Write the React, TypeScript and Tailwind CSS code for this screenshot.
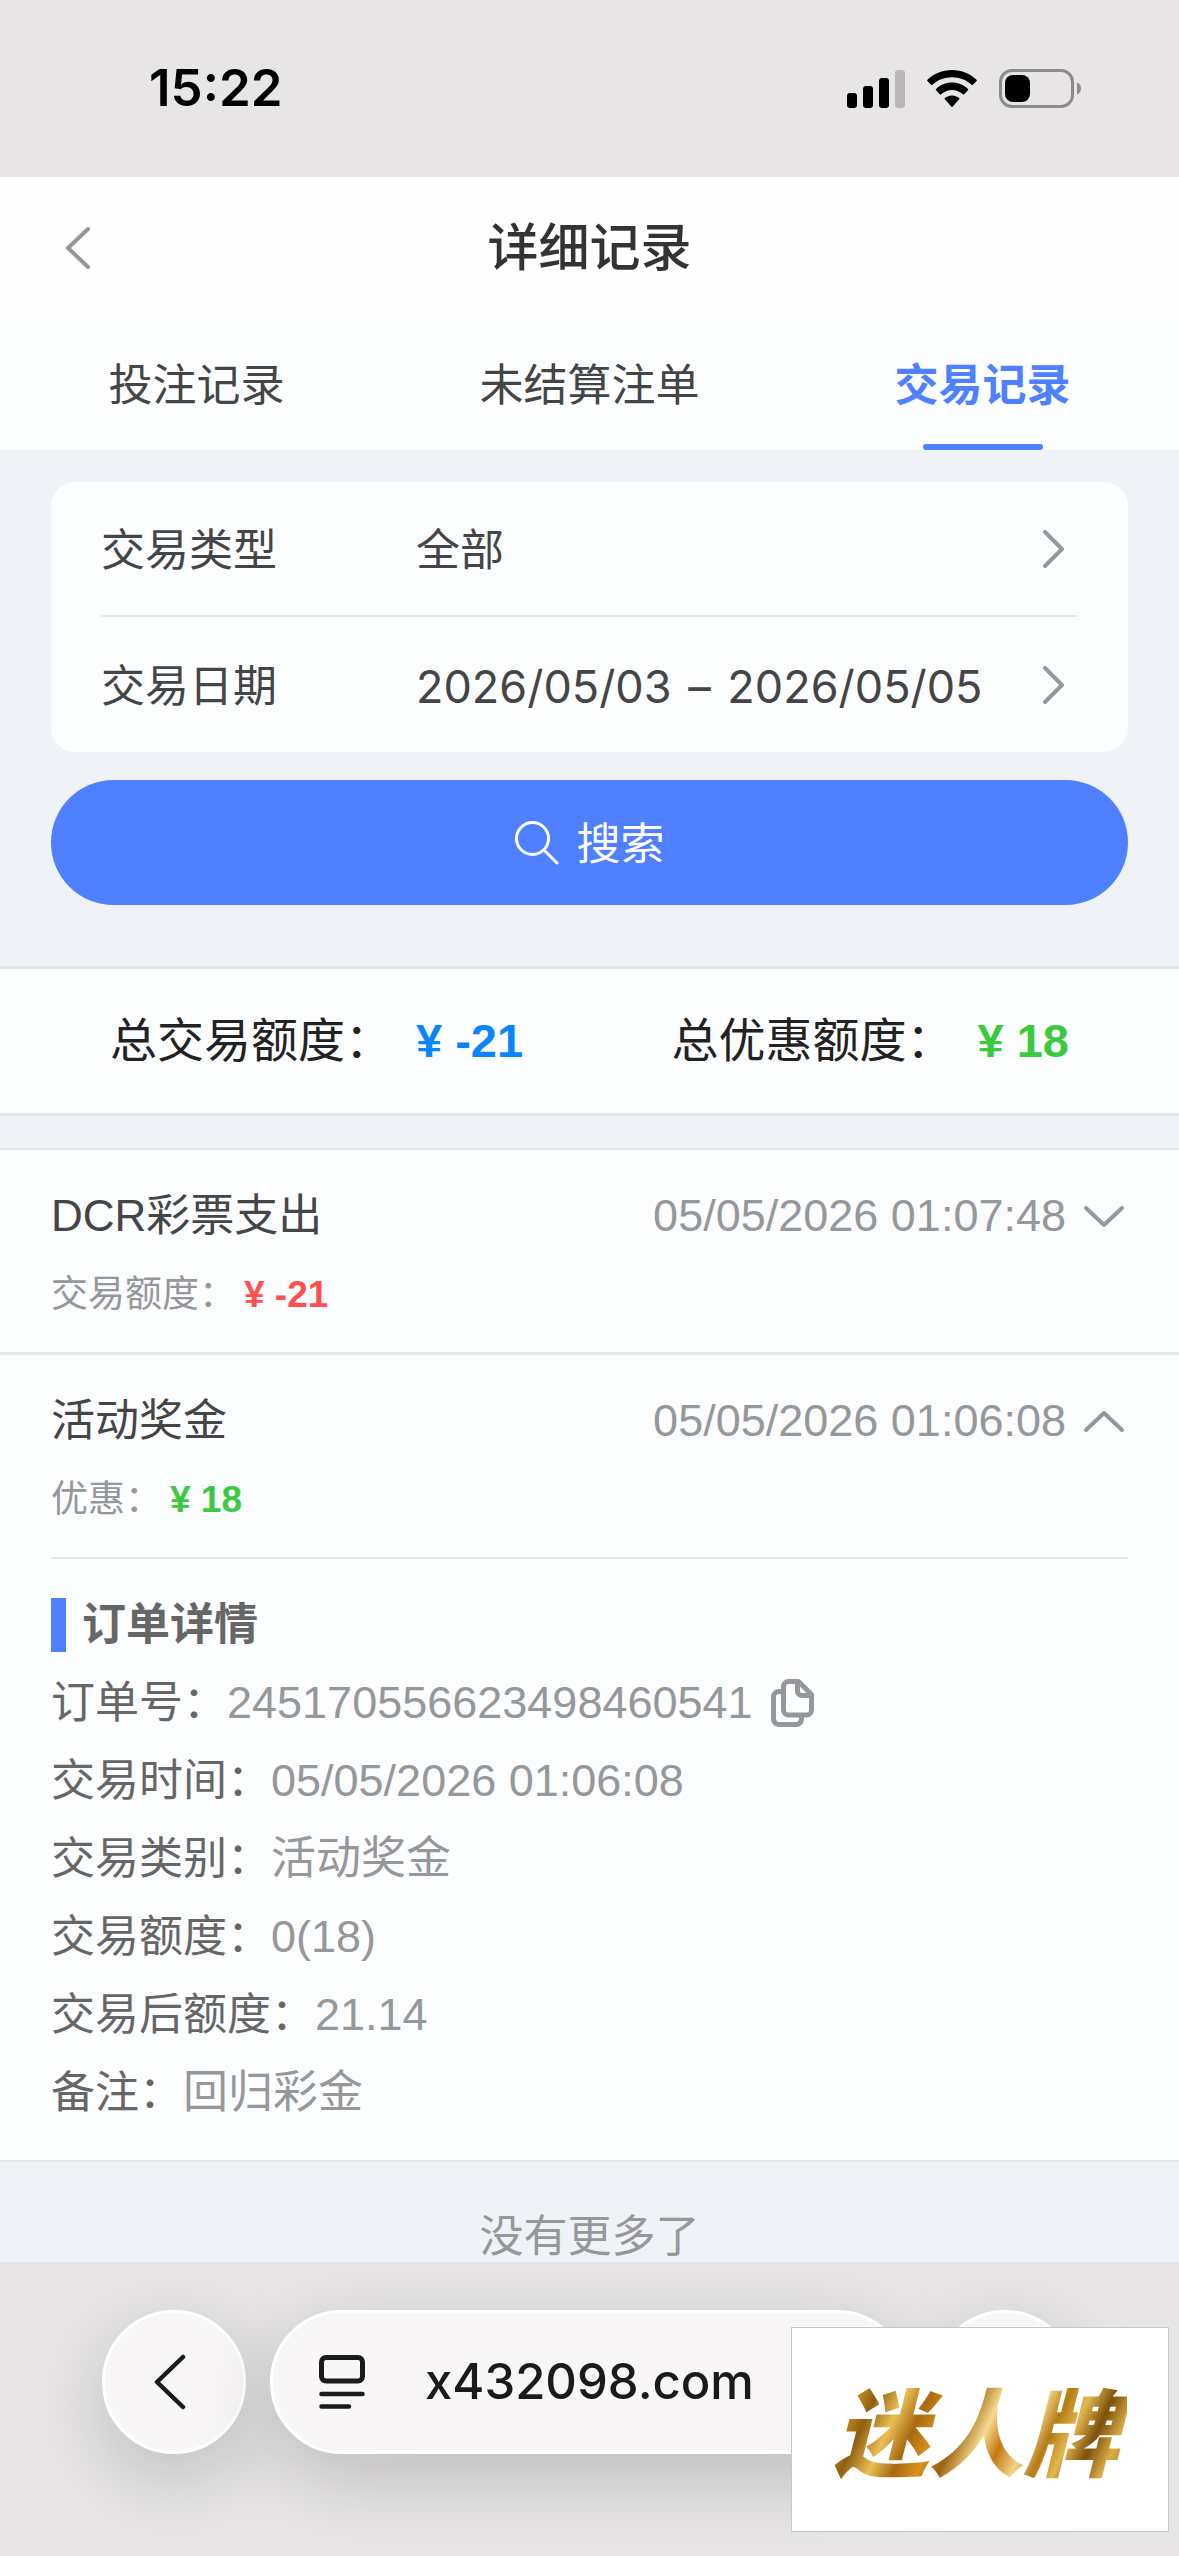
import type { ReactNode } from "react";

const CJK = "font-['Liberation_Sans','Noto_Sans_CJK_SC',sans-serif]";
const INTER = "font-['Inter','Noto_Sans_CJK_SC',sans-serif]";

function SignalIcon() {
  return (
    <svg width="58" height="38" viewBox="0 0 58 38" aria-hidden="true">
      <rect x="0" y="23" width="10" height="15" rx="3" />
      <rect x="16" y="16" width="10" height="22" rx="3" />
      <rect x="32" y="8" width="10" height="30" rx="3" />
      <rect x="48" y="0" width="10" height="38" rx="3" fill="#b9b7b8" />
    </svg>
  );
}

function WifiIcon() {
  return (
    <svg width="50" height="38" viewBox="0 0 50 38" aria-hidden="true">
      <path d="M25 0C15.300 0 6.500 3.800 0.400 9.800c-.4.400-.4.900 0 1.300l3.600 3.700c.4.400.9.400 1.300 0C10.400 10 17.300 7.200 25 7.200s14.600 2.800 19.700 7.600c.4.400.9.400 1.300 0l3.600-3.700c.4-.4.4-.9 0-1.300C43.500 3.800 34.700 0 25 0z" />
      <path d="M25 12.600c-6.200 0-11.800 2.400-16 6.300-.4.400-.4.900 0 1.300l3.800 4c.3.400.9.400 1.300 0 2.900-2.700 6.700-4.300 10.900-4.300s8 1.600 10.900 4.300c.4.400 1 .4 1.300 0l3.800-4c.4-.4.4-.9 0-1.300-4.200-3.900-9.800-6.300-16-6.300z" />
      <path d="M25 25.400c-2.700 0-5.200 1-7.100 2.600-.4.400-.5.900-.1 1.300l6.500 7.300c.4.400 1 .4 1.400 0l6.500-7.300c.4-.4.3-.9-.1-1.300-1.900-1.600-4.400-2.600-7.100-2.600z" />
    </svg>
  );
}

function BatteryIcon() {
  return (
    <svg width="82" height="39" viewBox="0 0 82 39" aria-hidden="true">
      <rect x="1.500" y="1.500" width="72" height="36" rx="11.500" fill="none" stroke="#8c8a8b" strokeWidth="3" />
      <rect x="6" y="6" width="25" height="27" rx="8" />
      <path d="M78 13.500c2.600 1 4 3.400 4 6s-1.400 5-4 6z" fill="#8c8a8b" />
    </svg>
  );
}

function Chevron({ path, width, height, className }: { path: string; width: number; height: number; className: string }) {
  return (
    <svg
      width={width}
      height={height}
      viewBox={`0 0 ${width} ${height}`}
      fill="none"
      stroke="currentColor"
      strokeWidth="4"
      strokeLinecap="round"
      strokeLinejoin="round"
      className={className}
      aria-hidden="true"
    >
      <path d={path} />
    </svg>
  );
}

function CopyIcon() {
  return (
    <svg width="43" height="48" viewBox="0 0 43 48" fill="none" stroke="currentColor" strokeWidth="5" strokeLinejoin="round" aria-hidden="true">
      <path d="M12 12.500H8A5.500 5.500 0 0 0 2.500 18v22A5.500 5.500 0 0 0 8 45.500h17A5.500 5.500 0 0 0 30.500 40v-3" />
      <path d="M17.500 2.500H27.500L40.500 15.500V31A5 5 0 0 1 35.500 36H17.500A5 5 0 0 1 12.500 31V7.500A5 5 0 0 1 17.500 2.500z" />
      <path d="M26.500 3v9a4.500 4.500 0 0 0 4.500 4.500h9" />
    </svg>
  );
}

function PageMenuIcon() {
  return (
    <svg width="46" height="54" viewBox="0 0 46 54" fill="none" stroke="currentColor" strokeWidth="4.500" strokeLinecap="round" aria-hidden="true">
      <rect x="2.500" y="2.500" width="41" height="23.500" rx="4.500" strokeWidth="5" />
      <path d="M2.500 39h41M2.500 51.500h27.500" />
    </svg>
  );
}

function Tab({ label, active }: { label: string; active?: boolean }) {
  return (
    <button
      type="button"
      role="tab"
      aria-selected={!!active}
      className={`flex flex-1 flex-col items-center justify-between pt-[38px] text-[44px] leading-[60px] ${active ? "font-bold text-[#4e80ff]" : "text-[#444546]"}`}
    >
      {label}
      <span className={`h-[6px] w-[120px] rounded-full ${active ? "bg-[#4e80ff]" : ""}`} />
    </button>
  );
}

function FilterRow({ label, children }: { label: string; children: ReactNode }) {
  return (
    <button type="button" className="flex h-[135px] w-full items-center text-left text-[44px] text-[#444546]">
      <span className="w-[315px] pt-1">{label}</span>
      <span className="flex-1 pt-1">{children}</span>
      <Chevron path="M2 2l17 17-17 17" width={21} height={38} className="mr-3.5 text-[#969799]" />
    </button>
  );
}

function Total({ label, value, color }: { label: string; value: string; color: string }) {
  return (
    <p className="flex items-center gap-6 text-[47px] text-[#222]">
      {label}
      <strong className={color}>{value}</strong>
    </p>
  );
}

type RecordProps = { title: string; time: string; label: string; value: string; color: string; open?: boolean; children?: ReactNode };

function RecordItem({ title, time, label, value, color, open, children }: RecordProps) {
  return (
    <article className="px-[51px]">
      <button type="button" aria-expanded={!!open} className="block w-full pt-9 pb-7 text-left">
        <span className="flex h-[60px] items-center">
          <span className="flex-1 text-[44px] text-[#444546]">{title}</span>
          <span className="text-[45px] text-[#969799]">{time}</span>
          <Chevron
            path={open ? "M2 19L20 2l18 17" : "M2 2l18 17L38 2"}
            width={40}
            height={21}
            className="mr-1 ml-[18px] text-[#969799]"
          />
        </span>
        <span className="mt-5 flex h-[58px] items-center gap-2 text-[37px] text-[#969799]">
          {label}
          <strong className={color}>{value}</strong>
        </span>
      </button>
      {children}
    </article>
  );
}

const details = [
  ["订单号：", "245170556623498460541"],
  ["交易时间：", "05/05/2026 01:06:08"],
  ["交易类别：", "活动奖金"],
  ["交易额度：", "0(18)"],
  ["交易后额度：", "21.14"],
  ["备注：", "回归彩金"],
];

const GLASS = "border-3 border-white bg-[#f8f6f7] shadow-[0_24px_80px_rgba(0,0,0,0.18)]";

export default function App() {
  return (
    <div lang="zh-CN" className={`flex min-h-screen flex-col overflow-hidden bg-[#eff2f6] ${CJK}`}>
      <div className="flex h-[177px] items-center justify-between bg-[#e7e5e6] pr-[98px] pl-[149px]">
        <time className="font-['Inter',sans-serif] text-[51px] font-semibold text-black">15:22</time>
        <div className="flex items-center gap-[22px]">
          <SignalIcon />
          <WifiIcon />
          <BatteryIcon />
        </div>
      </div>

      <header className="grid h-[141px] grid-cols-3 items-center bg-[#fefefe] px-16">
        <button type="button" aria-label="返回" className="justify-self-start">
          <Chevron path="M24 3L4 22l20 19" width={28} height={44} className="text-[#969696]" />
        </button>
        <h1 className="pt-1 text-center text-[51px] font-medium text-[#333]">详细记录</h1>
      </header>

      <div role="tablist" className="flex h-[132px] bg-[#fcfdff]">
        <Tab label="投注记录" />
        <Tab label="未结算注单" />
        <Tab label="交易记录" active />
      </div>

      <section className="px-[51px] pt-8 pb-[61px]">
        <div className="divide-y-2 divide-[#e6e7e8] rounded-3xl bg-[#fcfdff] px-[50px]">
          <FilterRow label="交易类型">全部</FilterRow>
          <FilterRow label="交易日期">
            <span className={`text-[45px] whitespace-nowrap ${INTER}`}>
              2026/05/03 <span className="mx-1">–</span> 2026/05/05
            </span>
          </FilterRow>
        </div>
        <button type="button" className="mt-7 flex h-[125px] w-full items-center justify-center gap-[18px] rounded-full bg-[#4e80ff] text-[44px] text-white">
          <svg width="44" height="44" viewBox="0 0 44 44" fill="none" stroke="currentColor" strokeWidth="3" strokeLinecap="round" aria-hidden="true">
            <circle cx="17.500" cy="17.500" r="16" />
            <path d="M29.500 29.500L42 42" />
          </svg>
          <span className="pt-1">搜索</span>
        </button>
      </section>

      <section className="flex h-[150px] items-center justify-between border-y-3 border-[#e4e5e5] bg-[#fcfdff] px-[110px]">
        <Total label="总交易额度：" value="¥ -21" color="text-[#0a84ff]" />
        <Total label="总优惠额度：" value="¥ 18" color="text-[#3bc93f]" />
      </section>

      <section className="mt-8 divide-y-3 divide-[#e6e8e8] border-y-2 border-[#e6e8e8] bg-[#fcfdff]">
        <RecordItem title="DCR彩票支出" time="05/05/2026 01:07:48" label="交易额度：" value="¥ -21" color="text-[#ff5050]" />
        <RecordItem title="活动奖金" time="05/05/2026 01:06:08" label="优惠：" value="¥ 18" color="text-[#3bc93f]" open>
          <div className="border-t-2 border-[#e6e7e8] pt-[39px] pb-7">
            <h2 className="flex items-center gap-4 text-[44px] font-bold text-[#666]">
              <span className="h-[54px] w-[15px] bg-[#4e80ff]" />
              <span className="leading-[54px]">订单详情</span>
            </h2>
            <dl className="mt-3 leading-[78px]">
              {details.map(([name, value], i) => (
                <div key={name} className="flex h-[78px] items-center">
                  <dt className="text-[44px] text-[#666]">{name}</dt>
                  <dd className="text-[45px] text-[#969799]">{value}</dd>
                  {i === 0 && (
                    <button type="button" aria-label="复制订单号" className="ml-[18px] text-[#969799]">
                      <CopyIcon />
                    </button>
                  )}
                </div>
              ))}
            </dl>
          </div>
        </RecordItem>
      </section>

      <p className="pt-[50px] text-center text-[44px] leading-[50px] text-[#969799]">没有更多了</p>

      <footer className="relative flex flex-1 items-start gap-6 overflow-hidden bg-[#e7e5e6] px-[102px] pt-12 pb-[102px] text-[#1a1a1a]">
        <button type="button" aria-label="后退" className={`flex size-36 shrink-0 items-center justify-center rounded-full pr-2 ${GLASS}`}>
          <svg width="32" height="56" viewBox="0 0 32 56" fill="none" stroke="currentColor" strokeWidth="4.500" strokeLinecap="round" strokeLinejoin="round" aria-hidden="true">
            <path d="M29 3L3 28l26 25" />
          </svg>
        </button>
        <div className={`flex h-36 flex-1 items-center rounded-full pl-[46px] ${GLASS}`}>
          <button type="button" aria-label="页面菜单">
            <PageMenuIcon />
          </button>
          <a href="#address" className="ml-[60px] font-['Inter',sans-serif] text-[49px] font-medium">x432098.com</a>
        </div>
        <button type="button" aria-label="更多" className={`size-36 shrink-0 rounded-full ${GLASS}`} />

        <div className="absolute right-[10px] bottom-[24px] flex h-[205px] w-[378px] items-center justify-center border border-[#c6c8ca] bg-white pb-1">
          <span className="bg-[linear-gradient(115deg,#7a4c08_0%,#c8901f_10%,#8f5f10_16%,#e9bf55_24%,#a86a10_31%,#d9921c_38%,#9a6210_44%,#f6dc8e_52%,#c4780f_58%,#f0d488_65%,#b57a14_71%,#e3b850_77%,#7d4f0a_84%,#dcae48_91%,#8a5a0c_100%)] bg-clip-text pr-2 font-['Noto_Sans_CJK_SC',sans-serif] text-[95px] leading-[120px] font-black text-transparent italic">
            迷人牌
          </span>
        </div>
      </footer>
    </div>
  );
}
